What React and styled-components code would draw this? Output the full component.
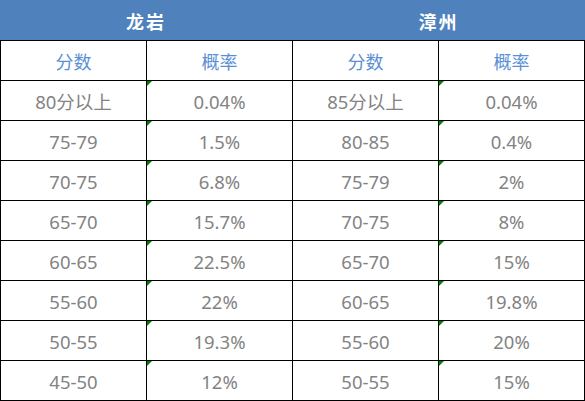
import React from "react";
import styled, { createGlobalStyle } from "styled-components";

const Global = createGlobalStyle`
  html, body { margin: 0; padding: 0; background: #fff; }
  body { font-family: "Noto Sans", "Noto Sans CJK SC", sans-serif; }
`;

const Sheet = styled.div`
  width: 585px;
`;

const TitleBar = styled.div`
  display: grid;
  grid-template-columns: 292px 293px;
  height: 40px;
  background: #4f81bd;
`;

const Title = styled.div`
  display: flex;
  align-items: center;
  justify-content: center;
  color: #fff;
  font-family: "Noto Sans CJK SC", sans-serif;
  font-weight: 700;
  font-size: 18px;
  letter-spacing: 2px;
  padding-top: 1px;
`;

const Grid = styled.div`
  display: grid;
  grid-template-columns: repeat(4, 146px);
  grid-auto-rows: 40px;
  border-top: 1px solid #000;
  border-left: 1px solid #000;
  width: 585px;
  box-sizing: border-box;
`;

const Cell = styled.div`
  position: relative;
  box-sizing: border-box;
  border-right: 1px solid #000;
  border-bottom: 1px solid #000;
  display: flex;
  align-items: center;
  justify-content: center;
  font-size: ${(p) => (p.$head ? "18px" : "18.5px")};
  color: ${(p) => (p.$head ? "#5b8fd5" : "#838383")};
  font-family: "Noto Sans", "Noto Sans CJK SC", sans-serif;
  padding-top: 1px;

  ${(p) =>
    p.$flag &&
    `
    &::before {
      content: "";
      position: absolute;
      top: 0;
      left: 0;
      width: 0;
      height: 0;
      border-top: 5px solid #008000;
      border-right: 5px solid transparent;
    }
  `}
`;

const left = [
  ["80分以上", "0.04%"],
  ["75-79", "1.5%"],
  ["70-75", "6.8%"],
  ["65-70", "15.7%"],
  ["60-65", "22.5%"],
  ["55-60", "22%"],
  ["50-55", "19.3%"],
  ["45-50", "12%"],
];

const right = [
  ["85分以上", "0.04%"],
  ["80-85", "0.4%"],
  ["75-79", "2%"],
  ["70-75", "8%"],
  ["65-70", "15%"],
  ["60-65", "19.8%"],
  ["55-60", "20%"],
  ["50-55", "15%"],
];

export default function App() {
  return (
    <Sheet>
      <Global />
      <TitleBar>
        <Title>龙岩</Title>
        <Title>漳州</Title>
      </TitleBar>
      <Grid>
        <Cell $head>分数</Cell>
        <Cell $head>概率</Cell>
        <Cell $head>分数</Cell>
        <Cell $head>概率</Cell>
        {left.map((row, i) => (
          <React.Fragment key={i}>
            <Cell>{row[0]}</Cell>
            <Cell $flag>{row[1]}</Cell>
            <Cell>{right[i][0]}</Cell>
            <Cell $flag>{right[i][1]}</Cell>
          </React.Fragment>
        ))}
      </Grid>
    </Sheet>
  );
}
